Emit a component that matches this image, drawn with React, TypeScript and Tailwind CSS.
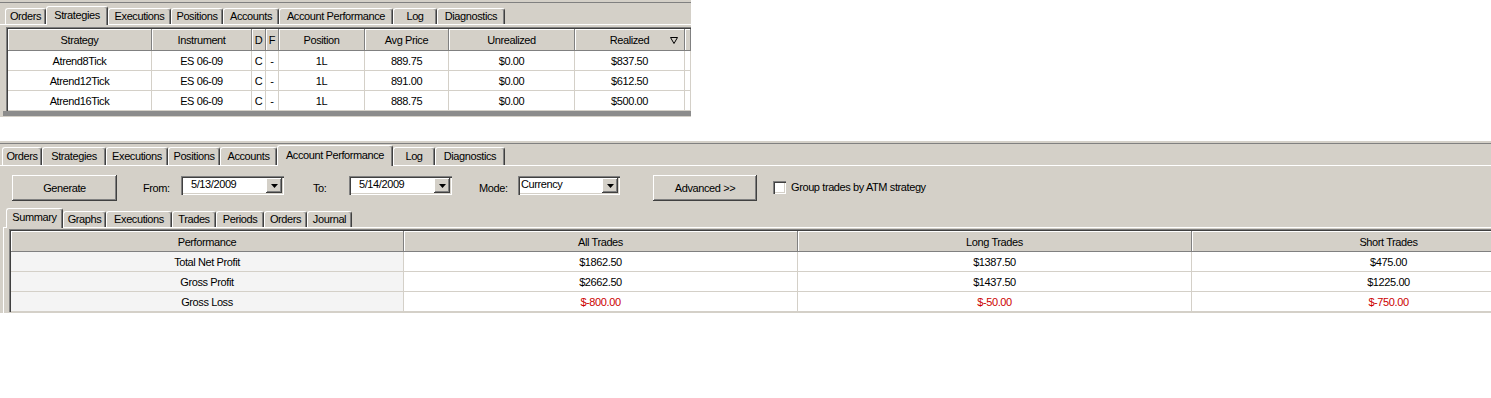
import React from "react";

const FONT = "font-['Liberation_Sans',Arial,sans-serif] text-[11px] tracking-[-0.4px] text-black leading-none";
const raised = "bg-[#d4d0c8] shadow-[inset_-1px_-1px_0_#404040,inset_1px_1px_0_#ffffff,inset_-2px_-2px_0_#808080]";
const sunken = "bg-white shadow-[inset_1px_1px_0_#808080,inset_2px_2px_0_#404040,inset_-1px_-1px_0_#ffffff,inset_-2px_-2px_0_#d4d0c8]";

type T = { label: string; w: string; sel?: boolean };

function Tab({ t, selH, unH }: { t: T; selH: string; unH: string }) {
  const base =
    "flex items-center justify-center whitespace-nowrap shrink-0 border-t border-l border-white border-r border-r-[#404040] shadow-[inset_-1px_0_0_#808080] rounded-t-[3px] bg-[#d4d0c8]";
  return (
    <div className={`${base} ${t.w} ${t.sel ? `${selH} relative z-10 -mb-px pb-[2px]` : unH}`}>
      {t.label}
    </div>
  );
}

const topTabs: T[] = [
  { label: "Orders", w: "w-[41px]" },
  { label: "Strategies", w: "w-[62px]", sel: true },
  { label: "Executions", w: "w-[63px]" },
  { label: "Positions", w: "w-[52px]" },
  { label: "Accounts", w: "w-[56px]" },
  { label: "Account Performance", w: "w-[114px]" },
  { label: "Log", w: "w-[44px]" },
  { label: "Diagnostics", w: "w-[68px]" },
];

const botTabs: T[] = [
  { label: "Orders", w: "w-[40px]" },
  { label: "Strategies", w: "w-[64px]" },
  { label: "Executions", w: "w-[62px]" },
  { label: "Positions", w: "w-[52px]" },
  { label: "Accounts", w: "w-[57px]" },
  { label: "Account Performance", w: "w-[116px]", sel: true },
  { label: "Log", w: "w-[42px]" },
  { label: "Diagnostics", w: "w-[70px]" },
];

const subTabs: T[] = [
  { label: "Summary", w: "w-[57px]", sel: true },
  { label: "Graphs", w: "w-[43px]" },
  { label: "Executions", w: "w-[66px]" },
  { label: "Trades", w: "w-[44px]" },
  { label: "Periods", w: "w-[48px]" },
  { label: "Orders", w: "w-[43px]" },
  { label: "Journal", w: "w-[45px]" },
];

const hdr =
  "flex items-center justify-center pt-[2px] border-r border-r-[#808080] shadow-[inset_1px_1px_0_#ffffff] bg-[#d4d0c8] whitespace-nowrap overflow-hidden";
const cell = "flex items-center justify-center pt-px border-r border-b border-[#d4d0c8] whitespace-nowrap overflow-hidden";

const topCols = [
  "w-[144px]",
  "w-[100px]",
  "w-[14px]",
  "w-[13px]",
  "w-[86px]",
  "w-[84px]",
  "w-[126px]",
  "w-[110px]",
  "w-[6px]",
];
const topHead = ["Strategy", "Instrument", "D", "F", "Position", "Avg Price", "Unrealized", "Realized", ""];
const topRows = [
  ["Atrend8Tick", "ES 06-09", "C", "-", "1L", "889.75", "$0.00", "$837.50", ""],
  ["Atrend12Tick", "ES 06-09", "C", "-", "1L", "891.00", "$0.00", "$612.50", ""],
  ["Atrend16Tick", "ES 06-09", "C", "-", "1L", "888.75", "$0.00", "$500.00", ""],
];

const botRows: { label: string; vals: string[]; red?: boolean }[] = [
  { label: "Total Net Profit", vals: ["$1862.50", "$1387.50", "$475.00"] },
  { label: "Gross Profit", vals: ["$2662.50", "$1437.50", "$1225.00"] },
  { label: "Gross Loss", vals: ["$-800.00", "$-50.00", "$-750.00"], red: true },
];

function Combo({ text, w, pl }: { text: string; w: string; pl: string }) {
  return (
    <div className={`${sunken} ${w} h-[19px] mt-px flex items-center justify-between pr-[2px] shrink-0`}>
      <span className={`${pl} pb-[3px]`}>{text}</span>
      <div className={`${raised} w-[16px] h-[15px] flex items-center justify-center`}>
        <svg width="7" height="4" viewBox="0 0 7 4">
          <path d="M0 0H7L3.5 4Z" fill="#000" />
        </svg>
      </div>
    </div>
  );
}

function TopPanel() {
  return (
    <div className="w-[691px] h-[117px] bg-[#d4d0c8] pt-[2px] flex flex-col">
      <div className="h-px bg-[#808080]" />
      <div className="h-[22px] flex items-end border-b border-white pl-[5px]">
        {topTabs.map((t) => (
          <Tab key={t.label} t={t} selH="h-[19px]" unH="h-[16px]" />
        ))}
      </div>
      <div className="ml-[6px] mt-[2px] border-t border-l border-[#808080] shadow-[inset_1px_1px_0_#404040] pt-px pl-px">
        <div className="flex h-[22px] border-b border-[#808080]">
          {topHead.map((h, i) => (
            <div key={i} className={`${hdr} ${topCols[i]} ${i === 7 ? "relative" : ""}`}>
              {h}
              {i === 7 && (
                <svg className="absolute right-[6px] top-[8px]" width="8" height="7" viewBox="0 0 8 7">
                  <path d="M0.5 0.5H7.5L4 6.5Z" fill="none" stroke="#000" strokeWidth="1" />
                </svg>
              )}
            </div>
          ))}
        </div>
        {topRows.map((r, ri) => (
          <div key={ri} className="flex h-[20px]">
            {r.map((v, i) => (
              <div key={i} className={`${cell} bg-white ${topCols[i]}`}>
                {v}
              </div>
            ))}
          </div>
        ))}
      </div>
      <div className="ml-[3px] h-[5px] bg-[#8c8c8c]" />
    </div>
  );
}

function BottomPanel() {
  return (
    <div className="w-[1491px] h-[172px] bg-[#d4d0c8] pt-[2px] flex flex-col overflow-hidden">
      <div className="h-px bg-[#808080]" />
      <div className="h-[22px] flex items-end border-b border-white pl-[2px]">
        {botTabs.map((t) => (
          <Tab key={t.label} t={t} selH="h-[21px]" unH="h-[18px]" />
        ))}
      </div>
      <div className="h-[39px] pt-[9px] pl-[12px] flex items-start">
        <div className={`${raised} w-[105px] h-[26px] flex items-center justify-center pt-px shrink-0`}>Generate</div>
        <div className="ml-[26px] w-[38px] h-[26px] flex items-center pt-px">From:</div>
        <Combo text="5/13/2009" w="w-[103px]" pl="pl-[10px]" />
        <div className="ml-[29px] w-[36px] h-[26px] flex items-center pt-px">To:</div>
        <Combo text="5/14/2009" w="w-[103px]" pl="pl-[10px]" />
        <div className="ml-[27px] w-[39px] h-[26px] flex items-center pt-px">Mode:</div>
        <Combo text="Currency" w="w-[102px]" pl="pl-[3px]" />
        <div className={`${raised} ml-[33px] w-[104px] h-[26px] flex items-center justify-center pt-px shrink-0`}>
          Advanced &gt;&gt;
        </div>
        <div className={`${sunken} ml-[16px] mt-[6px] w-[13px] h-[13px] shrink-0`} />
        <div className="ml-[5px] h-[25px] flex items-center whitespace-nowrap">Group trades by ATM strategy</div>
      </div>
      <div className="ml-[3px] flex flex-col flex-1">
        <div className="h-[23px] flex items-end border-b border-white pl-[3px]">
          {subTabs.map((t) => (
            <Tab key={t.label} t={t} selH="h-[20px]" unH="h-[16px]" />
          ))}
        </div>
        <div className="flex-1 border-l border-white pl-[5px] pt-px">
          <div className="border-t border-l border-[#808080] shadow-[inset_1px_1px_0_#404040] pt-px pl-px overflow-hidden">
            <div className="flex h-[21px] border-b border-[#808080] w-[1575px]">
              <div className={`${hdr} w-[393px] shrink-0`}>Performance</div>
              <div className={`${hdr} w-[394px] shrink-0`}>All Trades</div>
              <div className={`${hdr} w-[394px] shrink-0`}>Long Trades</div>
              <div className={`${hdr} w-[394px] shrink-0`}>Short Trades</div>
            </div>
            {botRows.map((r) => (
              <div key={r.label} className="flex h-[20px] w-[1575px]">
                <div className={`${cell} w-[393px] shrink-0 bg-[#f4f4f4]`}>{r.label}</div>
                {r.vals.map((v, i) => (
                  <div key={i} className={`${cell} bg-white w-[394px] shrink-0 ${r.red ? "text-[#cc0000]" : ""}`}>
                    {v}
                  </div>
                ))}
              </div>
            ))}
          </div>
        </div>
      </div>
    </div>
  );
}

export default function App() {
  return (
    <div className={`w-[1491px] h-[398px] bg-white overflow-hidden ${FONT}`}>
      <TopPanel />
      <div className="h-[24px]" />
      <BottomPanel />
    </div>
  );
}
